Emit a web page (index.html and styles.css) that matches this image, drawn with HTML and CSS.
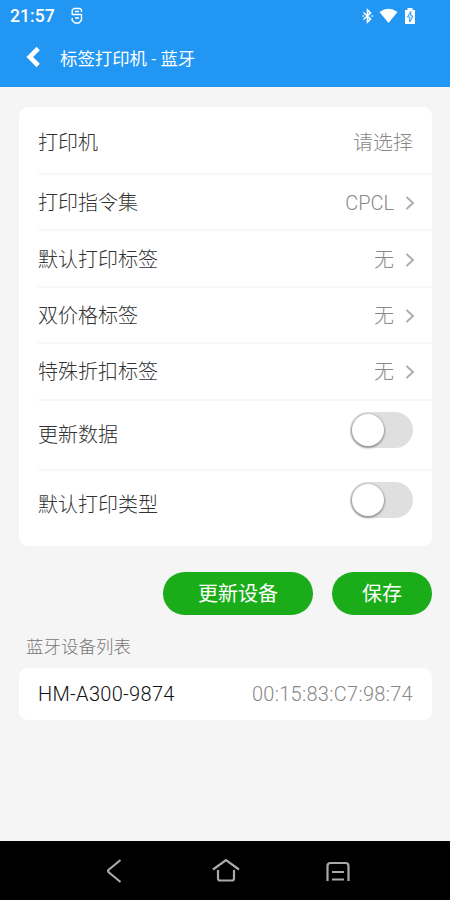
FILE: index.html
```
<!DOCTYPE html>
<html lang="zh-CN">
<head>
<meta charset="utf-8">
<meta name="viewport" content="width=device-width, initial-scale=1">
<title>标签打印机 - 蓝牙</title>
<link rel="stylesheet" href="styles.css">
</head>
<body>
<div class="screen">
  <header class="top">
    <div class="status">
      <span class="clock">21:57</span>
      <svg class="app-mark" width="14" height="18" viewBox="0 0 14 18" fill="none" stroke="#fff" stroke-width="1.400" stroke-linejoin="round"><path d="M11.500 5V3L10 1.500H4L2.200 3v4.500h9.300V13L9 16H5l-2.800-2.500V11M5 4.500h4M5 11h4"/></svg>
      <div class="status-icons">
        <svg width="12" height="18" viewBox="0 0 12 18" fill="none" stroke="#fff" stroke-width="1.600"><path d="M1.500 5.500l7 6.500L5.500 15V3l3 3-7 6.500"/><path d="M.5 9h1.500M9.500 9h1.500"/></svg>
        <svg width="19" height="18" viewBox="0 0 19 18"><path d="M.5 5Q9.500-1.500 18.500 5L9.500 16z" fill="#fff"/></svg>
        <svg width="12" height="18" viewBox="0 0 12 18"><path d="M3.500 1h5v2H11v14H1V3h2.500z" fill="#fff"/><path d="M6.800 4.500L3.500 10h2.200v5L9 9H6.800z" fill="#fff" stroke="#2196f3" stroke-width="1"/></svg>
      </div>
    </div>
    <div class="title-bar">
      <svg class="back" width="16" height="22" viewBox="0 0 16 22" fill="none" stroke="#fff" stroke-width="4.600"><path d="M13.200 2.500L4.700 11l8.500 8.500"/></svg>
      <h1>标签打印机 - 蓝牙</h1>
    </div>
  </header>

  <main>
    <section class="card settings">
      <div class="row first"><span>打印机</span><span class="value">请选择</span></div>
      <div class="row"><span>打印指令集</span><span class="value">CPCL<svg class="chevron" viewBox="0 0 10 14"><path d="M1.500 1l6.500 6-6.500 6"/></svg></span></div>
      <div class="row"><span>默认打印标签</span><span class="value">无<svg class="chevron" viewBox="0 0 10 14"><path d="M1.500 1l6.500 6-6.500 6"/></svg></span></div>
      <div class="row"><span>双价格标签</span><span class="value">无<svg class="chevron" viewBox="0 0 10 14"><path d="M1.500 1l6.500 6-6.500 6"/></svg></span></div>
      <div class="row"><span>特殊折扣标签</span><span class="value">无<svg class="chevron" viewBox="0 0 10 14"><path d="M1.500 1l6.500 6-6.500 6"/></svg></span></div>
      <div class="row toggle"><span>更新数据</span><span class="switch"></span></div>
      <div class="row toggle last"><span>默认打印类型</span><span class="switch"></span></div>
    </section>
    <div class="actions">
      <button class="wide">更新设备</button>
      <button>保存</button>
    </div>
    <h2>蓝牙设备列表</h2>
    <section class="card device"><span>HM-A300-9874</span><span class="value">00:15:83:C7:98:74</span></section>
  </main>

  <nav>
    <svg width="16" height="26" viewBox="0 0 16 26"><path d="M14.500 2L3 11.500q-2 1.500 0 3L14.500 24"/></svg>
    <svg width="28" height="26" viewBox="0 0 28 26"><path d="M1 11.500L14 2l13 9.500M6 12v8.500q0 2 2 2h12q2 0 2-2V12"/></svg>
    <svg width="24" height="26" viewBox="0 0 24 26"><path d="M1.500 23V8q0-3 3-3h15q3 0 3 3v15M6 14h12M6 21.500h12"/></svg>
  </nav>
</div>
</body>
</html>
```
FILE: styles.css
```
* { box-sizing: border-box; }
body {
  margin: 0;
  font-family: Roboto, "Noto Sans CJK SC", sans-serif;
  color: #333;
}
.screen {
  width: 450px;
  height: 900px;
  display: flex;
  flex-direction: column;
  background: #f5f5f5;
  overflow: hidden;
}
.top {
  height: 87px;
  flex: none;
  background: #2196f3;
  color: #fff;
}
.status {
  height: 32px;
  display: flex;
  align-items: center;
  padding: 0 34px 0 10px;
}
.clock { font-size: 17.600px; font-weight: 500; width: 60px; line-height: 32px; }
.status-icons { margin-left: auto; display: flex; gap: 6px; }
.status-icons svg:first-child { margin-right: -1px; }
.title-bar {
  height: 52px;
  display: flex;
  align-items: center;
  padding-left: 25px;
}
.back { margin-top: -2px; }
h1 {
  margin: 2px 0 0 19px;
  font-size: 17.400px;
  font-weight: 400;
  line-height: 24px;
}
main { flex: 1; padding: 20px 18px 0 19px; }
.card { background: #fff; border-radius: 9px; }
.settings { height: 439px; padding-left: 19px; }
.row {
  height: 56.400px;
  display: flex;
  align-items: center;
  justify-content: space-between;
  padding: 2px 19px 0 0;
  border-bottom: 2px solid #f8f8f8;
  font-size: 20px;
  font-weight: 300;
  line-height: 28px;
}
.row.first { height: 68px; padding-top: 6px; }
.value { display: flex; align-items: center; color: #888; font-weight: 300; }
.chevron {
  width: 10px;
  height: 14px;
  margin: 0 -2px 0 11px;
  fill: none;
  stroke: #aaa;
  stroke-width: 1.800;
}
.toggle { height: 70.700px; }
.toggle > span:first-child { margin-top: -2px; }
.toggle .switch { margin-top: -12px; }
.toggle.last { height: 68px; border: 0; }
.switch {
  width: 63px;
  height: 36px;
  border-radius: 18px;
  background: #dfdfdf;
}
.switch::before {
  content: "";
  display: block;
  width: 32px;
  height: 32px;
  margin: 2px;
  border-radius: 50%;
  background: #fff;
  box-shadow: 0 1px 2px 1px #999;
}
.actions {
  display: flex;
  justify-content: flex-end;
  gap: 19px;
  margin-top: 26px;
}
button {
  width: 100px;
  height: 43px;
  padding: 1px 0 0;
  border: 0;
  border-radius: 22px;
  background: #1aad19;
  color: #fff;
  font: 400 20px/42px Roboto, "Noto Sans CJK SC", sans-serif;
}
.wide { width: 150px; }
h2 {
  margin: 20px 0 9px 7px;
  font-size: 17.500px;
  font-weight: 300;
  line-height: 24px;
  color: #777;
}
.device {
  height: 52px;
  display: flex;
  align-items: center;
  justify-content: space-between;
  padding: 0 19px;
  font-size: 20px;
  font-weight: 300;
  letter-spacing: .3px;
}
.device > span:first-child { color: #111; }
nav {
  height: 59px;
  flex: none;
  display: flex;
  align-items: center;
  justify-content: space-between;
  padding: 0 100px 0 106px;
  background: #000;
}
nav svg { fill: none; stroke: #aaa; stroke-width: 2.200; }
nav svg:nth-child(2) { margin-left: 4px; }
```
